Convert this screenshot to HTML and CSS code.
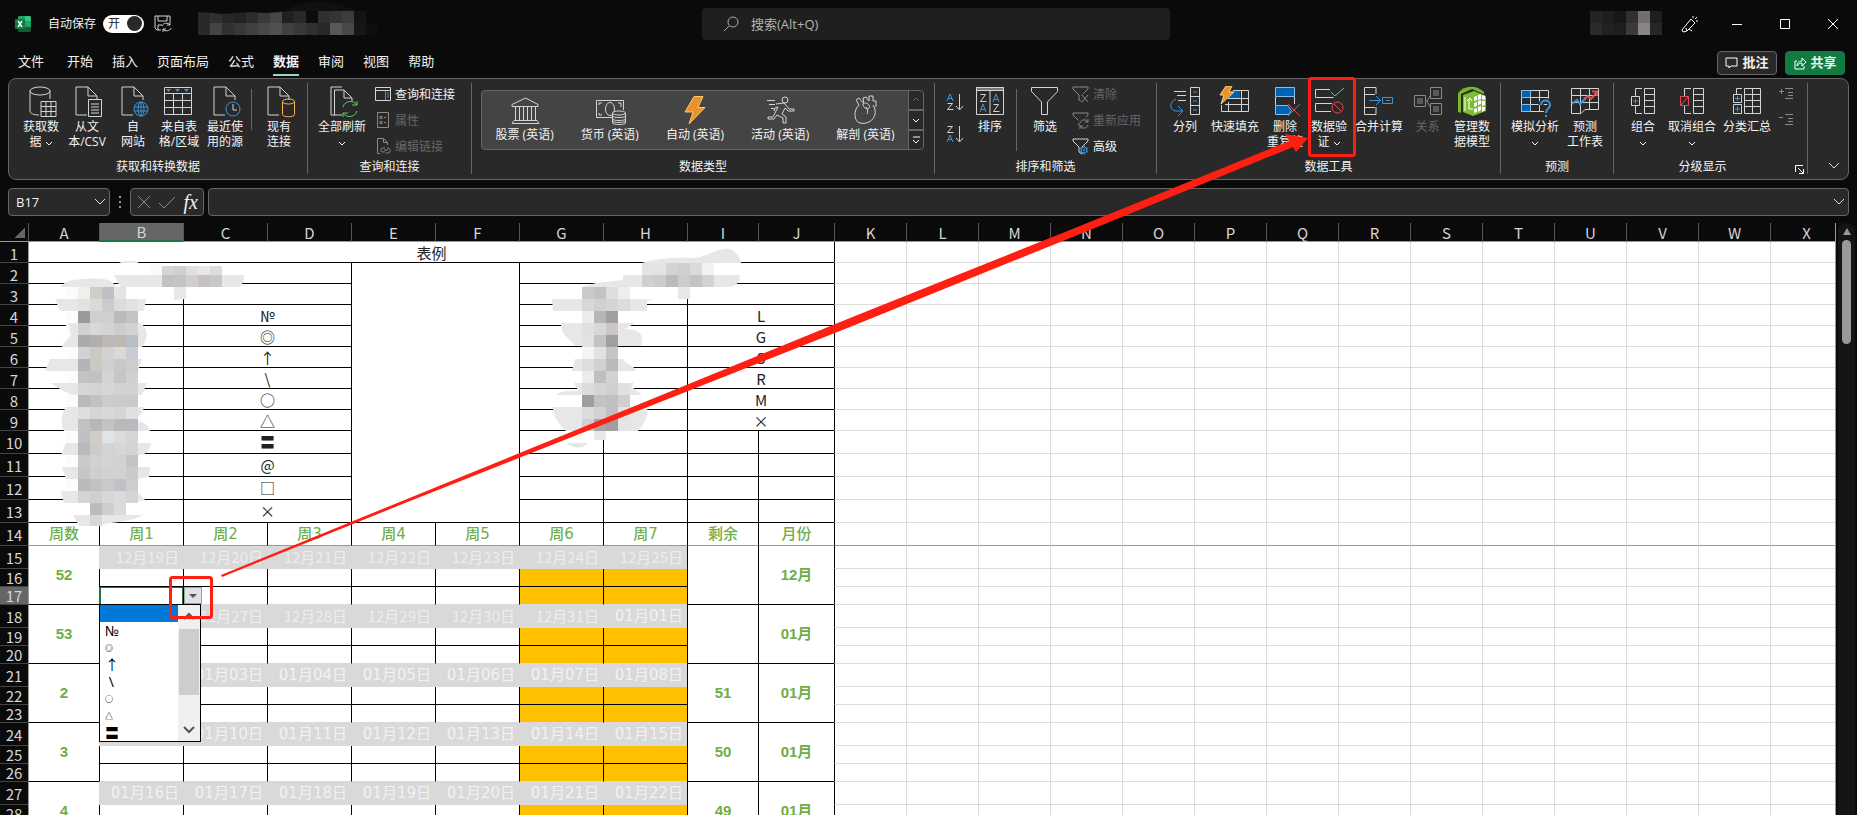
FILE: index.html
```html
<!DOCTYPE html>
<html lang="zh-CN">
<head>
<meta charset="utf-8">
<title>Excel</title>
<link rel="stylesheet" href="styles.css">
</head>
<body>
<svg class="defs" width="0" height="0" aria-hidden="true">
  <symbol id="doc" viewBox="0 0 32 32"><path d="M16 29H5V1h12l9 9v4M17 1v9h9"/></symbol>
  <symbol id="down" viewBox="0 0 8 8"><path d="M1 3l3 3 3-3"/></symbol>
  <symbol id="wide-down" viewBox="0 0 12 8"><path d="M1 1l5 5 5-5"/></symbol>
  <symbol id="funnel" viewBox="0 0 18 18"><path d="M1 2h15v2l-6 6v7l-3-2v-5L1 4z"/></symbol>
</svg>

<header class="titlebar">
  <div class="title-left">
    <svg class="i16" viewBox="0 0 16 16"><path fill="#21a366" d="M4 0h6v5H3V1z"/><path fill="#33c481" d="M10 0h5l1 1v4h-6z"/><path fill="#107c41" d="M3 5h7v6H3z"/><path fill="#21a366" d="M10 5h6v6h-6z"/><path fill="#185c37" d="M3 11h13v4l-1 1H4l-1-1z"/><rect fill="#107c41" y="3" width="10" height="10" rx="1"/><path stroke="#fff" stroke-width="1.500" d="M3 5l4 6M7 5l-4 6"/></svg>
    <span class="autosave">自动保存</span>
    <button class="toggle" aria-label="自动保存"><span>开</span><i></i></button>
    <button class="plain" aria-label="保存"><svg class="i18" viewBox="0 0 18 18"><path d="M7 15H3l-2-2V1h15v6M4 1v5h9V1M4 15v-5h4"/><path d="M8 11c1-3 6-4 8-1V7m0 3h-3M17 13c-1 3-6 4-8 1v3m0-3h3"/></svg></button>
  </div>
  <label class="search"><svg class="i16" viewBox="0 0 16 16"><circle cx="10" cy="6" r="5"/><path d="M6 10l-5 5"/></svg><input type="text" placeholder="搜索(Alt+Q)" aria-label="搜索"></label>
  <div class="title-right">
    <button class="plain pen" aria-label="画笔"><svg class="i18" viewBox="0 0 18 18"><path d="M10 4l4 4-8 8-4 1-1-2zM6 16l-1-3M8 14l3 2M12 3V1m2 3l2-2m-1 4h2"/></svg></button>
    <button class="win" aria-label="最小化"><svg class="i12" viewBox="0 0 12 12"><path d="M1 6.500h10"/></svg></button>
    <button class="win" aria-label="最大化"><svg class="i12" viewBox="0 0 12 12"><path d="M1.500 1.500h9v9h-9z"/></svg></button>
    <button class="win" aria-label="关闭"><svg class="i12" viewBox="0 0 12 12"><path d="M1 1l10 10M11 1L1 11"/></svg></button>
  </div>
</header>

<nav class="tabs">
  <button class="tab first">文件</button><button class="tab">开始</button><button class="tab">插入</button><button class="tab">页面布局</button><button class="tab">公式</button><button class="tab active">数据</button><button class="tab">审阅</button><button class="tab">视图</button><button class="tab">帮助</button>
  <div class="tab-actions">
    <button class="action"><svg class="i14" viewBox="0 0 14 14"><path d="M1 2h11v8H6l-2 2v-2H1z"/></svg>批注</button>
    <button class="action share"><svg class="i14" viewBox="0 0 14 14"><path d="M4 5H2v8h9v-3M4 10c0-4 3-5 5-5V2l4 4-4 4V7C7 7 5 8 4 10z"/></svg>共享</button>
  </div>
</nav>

<section class="ribbon">
  <div class="group g-get">
    <div class="tools">
      <button class="big w46"><svg viewBox="0 0 32 32"><ellipse cx="15" cy="5" rx="10" ry="4"/><path d="M5 5v20c0 2 3 4 9 4M25 5v8M16 15.500h15v15H16zM16 20.500h15M16 25.500h15M21 15.500v15M26 15.500v15"/></svg><span>获取数<br>据 <svg class="chev"><use href="#down"/></svg></span></button>
      <button class="big w46"><svg viewBox="0 0 32 32"><use href="#doc"/><path class="cut" d="M17.500 13.500h13v17h-13z"/><path d="M20 18h8M20 21h8M20 24h8M20 27h8"/></svg><span>从文<br>本/CSV</span></button>
      <button class="big w46"><svg viewBox="0 0 32 32"><use href="#doc"/><g class="blue"><circle class="cut" cx="24" cy="23" r="7"/><ellipse cx="24" cy="23" rx="3" ry="7"/><path d="M24 16v14M17 21h14M17 25h14"/></g></svg><span>自<br>网站</span></button>
      <button class="big w46"><svg viewBox="0 0 32 32"><path d="M1.500 1.500h27v27h-27zM1 7.500h28M1 14.500h28M1 21.500h28M10.500 7v21M19.500 7v21"/><path class="bluef" d="M3 3h5L5.500 6zM12 3h5l-2.500 3zM21 3h5l-2.500 3z"/></svg><span>来自表<br>格/区域</span></button>
      <button class="big w46"><svg viewBox="0 0 32 32"><use href="#doc"/><circle class="cut blue" cx="24" cy="23" r="7"/><path d="M24 18v6h4"/></svg><span>最近使<br>用的源</span></button>
      <i class="sep"></i>
      <button class="big w46"><svg viewBox="0 0 32 32"><use href="#doc"/><g class="gold"><path class="cut" d="M19.500 15.500v13c0 3 12 3 12 0v-13"/><ellipse cx="25.500" cy="15.500" rx="6" ry="2.500"/></g></svg><span>现有<br>连接</span></button>
    </div>
    <div class="caption">获取和转换数据</div>
  </div>
  <div class="group g-query">
    <div class="tools">
      <button class="big w52"><svg viewBox="0 0 32 32"><path d="M9 29H5V1h11M16 29H8.500V4H18l8 8v3M18 4v8h8"/><g class="green"><path d="M17 21c2-7 11-7 14-2v-4m0 4h-5M31 25c-2 7-11 7-14 2v4m0-4h5"/></g></svg><span>全部刷新<br><svg class="chev"><use href="#down"/></svg></span></button>
      <div class="stack">
        <button class="small"><svg class="i18" viewBox="0 0 18 18"><path d="M1.500 2.500h15v13h-15zM1 5.500h15"/><path class="blue" d="M11.500 6v9M13 8h2M13 10h2M13 12h2"/></svg>查询和连接</button>
        <button class="small off" disabled><svg class="i18" viewBox="0 0 18 18"><path d="M3.500 1.500h11v15h-11zM6 5.500h2v2H6zM6 10.500h2v2H6zM10 6.500h2M10 11.500h2"/></svg>属性</button>
        <button class="small off" disabled><svg class="i18" viewBox="0 0 18 18"><path d="M6 16.500H3.500v-15h6l4 4V8M9.500 1.500v4h4"/><path d="M11 11h-2c-3 0-3 4 0 4h2M13 11h1c3 0 3 5 0 5h-2M10 13h4"/></svg>编辑链接</button>
      </div>
    </div>
    <div class="caption">查询和连接</div>
  </div>
  <div class="group g-types">
    <div class="gallery">
      <button><svg viewBox="0 0 32 32"><path d="M3 9.500L16.500 3 29 9.500v2H3zM6.500 12v13M10.500 12v13M14.500 12v13M18.500 12v13M22.500 12v13M26.500 12v13M5 25.500h23l2 3H3z"/></svg>股票 (英语)</button>
      <button><svg viewBox="0 0 32 32"><path d="M18 22.500H2.500v-17h27V15M5 10V8h3M24 8h3v4M5 18v2h3"/><ellipse cx="16" cy="14" rx="4.500" ry="6.500"/><path class="cut4" d="M18.500 18v10c0 2 13 2 13 0V18"/><ellipse class="cut4" cx="25" cy="18" rx="6.500" ry="2"/><path d="M18.500 21c0 2 13 2 13 0M18.500 24c0 2 13 2 13 0M18.500 26c0 2 13 2 13 0"/></svg>货币 (英语)</button>
      <button><svg viewBox="0 0 32 32"><path fill="#e8912d" stroke="#ffc866" d="M15 1.500h9l-5 11h7L10 29l4-12H6z"/></svg>自动 (英语)</button>
      <button><svg viewBox="0 0 32 32"><circle cx="21" cy="5" r="3"/><path d="M3 5.500h8M5 9.500h6M7 13.500h3M12 9l8-1 5 6h5v2h-6l-3-3-3 6 4 3v6h-3v-5l-6-3-3 4H4v-2h5l5-10-3 1-1 3"/></svg>活动 (英语)</button>
      <button><svg viewBox="0 0 32 32"><path d="M10 10c-6 5-5 17 1 18 8 2 17-4 15-14l-2-4M10 10L7 5l3-2 5 6-1-6 3-1 3 4V1h4v5h3v6M14 9c0 4 4 5 5 5M19 14c3-2 1-6-3-6M17 12c2 3 2 5 1 7"/></svg>解剖 (英语)</button>
      <div class="spin">
        <button class="dim" aria-label="上"><svg class="chev flip"><use href="#down"/></svg></button>
        <button aria-label="下"><svg class="chev"><use href="#down"/></svg></button>
        <button aria-label="更多"><svg class="chev" viewBox="0 0 8 8"><path d="M1 1h7M1 4l3 3 3-3"/></svg></button>
      </div>
    </div>
    <div class="caption">数据类型</div>
  </div>
  <div class="group g-sort">
    <div class="tools">
      <div class="sorts">
        <button class="plain" aria-label="升序"><svg viewBox="0 0 20 20"><path class="blue" d="M1 9l3-7 3 7M2 6.500h4"/><path d="M1.500 11.500h5l-5 6h6M13.500 2v15M10 14l3.500 4 3.500-4"/></svg></button>
        <button class="plain" aria-label="降序"><svg viewBox="0 0 20 20"><path class="blue" d="M1 18l3-7 3 7M2 15.500h4"/><path d="M1.500 2.500h5l-5 6h6M13.500 2v15M10 14l3.500 4 3.500-4"/></svg></button>
      </div>
      <button class="big w46"><svg viewBox="0 0 32 32"><path fill="#777" d="M2.500 1.500h27v3h-27z"/><path d="M2.500 1.500h27v27h-27zM16 5v23M6.500 8.500h5l-5 7h6M19.500 18.500h5l-5 7h6"/><path class="blue" d="M6 26l3-8 3 8M7 23.500h4M19 16l3-8 3 8M20 13.500h4"/></svg><span>排序</span></button>
      <i class="sep tall"></i>
      <button class="big w46"><svg viewBox="0 0 32 32"><path d="M2.500 1.500h26v4L18.500 16v12.500h-6V16L2.500 5.500z"/></svg><span>筛选</span></button>
      <div class="stack">
        <button class="small off" disabled><svg class="i18" viewBox="0 0 18 18"><use href="#funnel"/><path class="halo" d="M10 10l6 7M16 10l-6 7"/><path d="M10 10l6 7M16 10l-6 7"/></svg>清除</button>
        <button class="small off" disabled><svg class="i18" viewBox="0 0 18 18"><use href="#funnel"/><path class="halo" d="M8 12c1-4 7-4 8-1V8m0 3h-3M16 14c-1 4-7 4-8 1v3m0-3h3"/><path d="M8 12c1-4 7-4 8-1V8m0 3h-3M16 14c-1 4-7 4-8 1v3m0-3h3"/></svg>重新应用</button>
        <button class="small"><svg class="i18" viewBox="0 0 18 18"><use href="#funnel"/><g class="blue"><circle class="cut" cx="12" cy="13" r="3"/><circle cx="12" cy="13" r="1"/><path d="M12 8v2M12 16v2M8 11l2 1M14 14l2 1M8 15l2-1M14 12l2-1"/></g></svg>高级</button>
      </div>
    </div>
    <div class="caption">排序和筛选</div>
  </div>
  <div class="group g-data">
    <div class="tools">
      <button class="big w40"><svg viewBox="0 0 32 32"><path d="M5 5.500h12M8 9.500h9M9 14.500h8M21.500 1.500h9v27h-9zM21 10.500h9M21 19.500h9"/><path class="blue" d="M24 6h4M24 15h4M24 24h4M7 13c-7 3-7 11 0 12h7M9 20l5 5-5 5"/></svg><span>分列</span></button>
      <button class="big w60"><svg viewBox="0 0 32 32"><path fill="#0063b1" stroke="none" d="M11 5h10v7H8z"/><path d="M14 4.500h15.500v21h-27V19M9 12.500h20M6 18.500h23M22.500 5v20M9.500 16v10"/><path fill="#e8912d" stroke="#ffd27a" d="M7 0h6l-3 6h5L2 18l3-9H1z"/></svg><span>快速填充</span></button>
      <button class="big w40"><svg viewBox="0 0 32 32"><path class="solid" d="M6.500 1.500h19v9h-19zM6.500 19.500h12l4 5-3 4h-13z"/><path d="M6.500 11v8M25.500 11v7"/><path class="red" d="M19 18l12 12M31 18L19 30"/></svg><span>删除<br>重复值</span></button>
      <button class="big w48"><svg viewBox="0 0 32 32"><path d="M17 3.500H2.500v8h18M19 17.500H2.500v8H18"/><path class="green" d="M18 6l4 4 9-8"/><g class="red"><circle cx="24.500" cy="21.500" r="5.500"/><path d="M21 18l7 7"/></g></svg><span>数据验<br>证 <svg class="chev"><use href="#down"/></svg></span></button>
      <button class="big w52"><svg viewBox="0 0 32 32"><path d="M13 8V1.500H1.500v27H13V21M1 8.500h11M1 21.500h11"/><path class="blue" d="M6 14.500h11M13 10l4.500 4.500L13 19M19.500 11.500h10v6h-10zM23 14.500h4"/></svg><span>合并计算</span></button>
      <button class="big w45 off" disabled><svg viewBox="0 0 32 32"><path d="M2.500 9.500h11v11h-11zM18.500 1.500h11v11h-11zM18.500 17.500h11v11h-11zM13 15h2l3-5M15 15l3 6M5 13h6M5 15h6M5 17h6M21 5h6M21 7h6M21 9h6M21 21h6M21 23h6M21 25h6"/></svg><span>关系</span></button>
      <button class="big w44"><svg viewBox="0 0 32 32"><path fill="#76b82a" stroke="none" d="M2 7c7-8 18-8 26-1v20l-12 4L2 26z"/><path fill="#292929" stroke="none" d="M5 8l11-5 14 6v17l-13 6L5 28z"/><path fill="#7cbf2e" stroke="none" d="M7 9l11-4 12 5v15l-13 5L7 26z"/><path stroke="#fff" d="M9 11v14M13 13v10M11 15l3-3 2 3M13 23h4"/><path fill="#fff" stroke="none" d="M18 11l3-1v4l-3 1zM22 9l3-1v5l-3 1zM26 9l3 1v4l-3-1zM18 17l3-1v4l-3 1zM22 15l3-1v4l-3 1zM26 15h3v4l-3 1zM18 23l3-1v4l-3 1zM22 21l3-1v4l-3 2zM26 21h3v3l-3 2z"/></svg><span>管理数<br>据模型</span></button>
    </div>
    <div class="caption">数据工具</div>
  </div>
  <div class="group g-fore">
    <div class="tools">
      <button class="big w52"><svg viewBox="0 0 32 32"><path d="M2.500 4.500h27v21h-27zM2 11.500h27M2 18.500h27M11.500 5v20M20.500 5v20"/><path class="solid" d="M2.500 4.500h9v7h-9zM2.500 18.500h9v7h-9z"/><path class="halo" d="M22 19c0-6 9-6 9 0 0 4-4 3-4 8M27 29v2"/><path class="blue thick" d="M22 19c0-6 9-6 9 0 0 4-4 3-4 8M27 29v2"/></svg><span>模拟分析<br><svg class="chev"><use href="#down"/></svg></span></button>
      <button class="big w48"><svg viewBox="0 0 32 32"><path d="M2.500 2.500h27v21H16l-4 4H2.500zM2 9.500h27M2 16.500h27M11.500 3v24M20.500 3v20"/><path class="blue thick" d="M3 18l5-4 3 4 6-6"/><path class="red thick" d="M15 13l4-3 3 3 6-7M23 5.500h5V10"/></svg><span>预测<br>工作表</span></button>
    </div>
    <div class="caption">预测</div>
  </div>
  <div class="group g-outline">
    <div class="tools">
      <button class="big w40"><svg viewBox="0 0 32 32"><path d="M15 2.500H8.500v25H15M17.500 2.500h10v25h-10zM17 8.500h10M17 14.500h10M17 20.500h10"/><path class="cut" d="M4.500 10.500h8v9h-8z"/><path class="blue" d="M6 15h5M8.500 12.500v5"/></svg><span>组合<br><svg class="chev"><use href="#down"/></svg></span></button>
      <button class="big w58"><svg viewBox="0 0 32 32"><path d="M15 2.500H8.500v25H15M17.500 2.500h10v25h-10zM17 8.500h10M17 14.500h10M17 20.500h10"/><path class="cut red" d="M4.500 10.500h8v9h-8zM5 19l7-8"/></svg><span>取消组合<br><svg class="chev"><use href="#down"/></svg></span></button>
      <button class="big w52"><svg viewBox="0 0 32 32"><path d="M11 2.500H5.500V8M13.500 2.500h16v25h-16zM13 8.500h16M13 14.500h16M13 20.500h16M21.500 3v24M2.500 8.500h8v8h-8zM2.500 18.500h8v9h-8z"/><path class="blue" d="M4 12.500h5M6.500 10v5M4 23h5M6.500 20.500v5"/></svg><span>分类汇总</span></button>
      <div class="stack">
        <button class="small off" aria-label="显示明细"><svg class="i18" viewBox="0 0 18 18"><path d="M2 6.500h5M4.500 4v5M8 3.500h8M11 7.500h5M11 10.500h5M8 13.500h8"/></svg></button>
        <button class="small off" aria-label="隐藏明细"><svg class="i18" viewBox="0 0 18 18"><path d="M2 6.500h4M8 3.500h8M11 7.500h5M11 10.500h5M8 13.500h8"/></svg></button>
      </div>
    </div>
    <div class="caption launch">分级显示<button class="plain" aria-label="设置"><svg viewBox="0 0 9 9"><path d="M.5 7V.5H8M3 3l5 5M8.500 4v4.500H4"/></svg></button></div>
  </div>
  <button class="plain collapse" aria-label="折叠"><svg class="wd"><use href="#wide-down"/></svg></button>
</section>

<section class="formula">
  <label class="field namebox"><input type="text" value="B17" aria-label="名称框"><svg class="wd"><use href="#wide-down"/></svg></label>
  <span class="dots"><i></i><i></i><i></i></span>
  <div class="field fx">
    <button class="plain off" aria-label="取消"><svg class="i14" viewBox="0 0 14 14"><path d="M1 1l12 12M13 1L1 13"/></svg></button>
    <button class="plain off" aria-label="输入"><svg class="i18" viewBox="0 0 18 14"><path d="M1 8l5 5L17 2"/></svg></button>
    <button class="plain fn">fx</button>
  </div>
  <label class="field input"><input type="text" aria-label="编辑栏"><svg class="wd"><use href="#wide-down"/></svg></label>
</section>

<main class="workspace">
  <div class="sheet"><table class="grid" id="grid"></table></div>
  <div class="scroll"><i class="up"></i><i class="thumb"></i></div>
</main>

<svg class="overlay" id="overlay" width="1857" height="815" viewBox="0 0 1857 815" aria-hidden="true"></svg>
<script src="sheet.js"></script>
</body>
</html>
```

FILE: styles.css
```css
* { box-sizing: border-box; }
body { margin: 0; height: 100vh; overflow: hidden; display: flex; flex-direction: column; position: relative; background: #0a0a0a; color: #f2f2f2; font: 12px/15px "Open Sans", "Noto Sans CJK SC", sans-serif; }
button, input { font: inherit; color: inherit; background: none; border: 0; padding: 0; margin: 0; outline: 0; }
svg { fill: none; stroke: #d4d4d4; stroke-width: 1; display: block; flex: none; }
.defs { position: absolute; }
.i12 { width: 12px; height: 12px; stroke: #fff; }
.i14 { width: 14px; height: 14px; }
.i16 { width: 16px; height: 16px; }
.i18 { width: 18px; height: 18px; }
.plain { display: flex; align-items: center; justify-content: center; }
.blue { stroke: #3a96dd; }
.bluef { fill: #3a96dd; stroke: none; }
svg .halo { stroke: #292929; stroke-width: 5; }
.solid { fill: #0063b1; stroke: #83beec; }
.green { stroke: #5fc878; }
.red { stroke: #e74856; }
.gold { stroke: #ffb254; }
.thick { stroke-width: 2; }
.cut { fill: #292929; }
.cut4 { fill: #444; }
.off { color: #666; }
.off svg { stroke: #8a8a8a; }

.titlebar { height: 47px; flex: none; display: grid; grid-template-columns: 1fr 468px 1fr; align-items: center; padding-left: 15px; }
.title-left { display: flex; align-items: center; }
.title-left > svg { stroke: none; }
.autosave { margin: 0 7px 0 17px; }
.toggle { width: 41px; height: 18px; border-radius: 9px; background: #fff; color: #222; display: flex; align-items: center; justify-content: space-between; padding: 0 2px 0 5px; margin-right: 10px; }
.toggle i { width: 15px; height: 15px; border-radius: 50%; background: #292929; }
.search { height: 32px; border-radius: 4px; background: #1f1f1f; display: flex; align-items: center; gap: 12px; padding-left: 21px; color: #b4b4b4; font-size: 13px; }
.search svg { stroke: #aaa; }
.search input { flex: 1; height: 24px; }
.search input::placeholder { color: #b4b4b4; opacity: 1; }
.title-right { display: flex; justify-content: flex-end; align-items: center; }
.title-right svg { stroke: #fff; }
.pen { margin-right: 14px; }
.win { width: 48px; height: 32px; display: flex; align-items: center; justify-content: center; }

.tabs { height: 31px; flex: none; display: flex; align-items: center; gap: 19px; padding: 0 12px 0 18px; font-size: 13px; }
.tab { height: 26px; border-bottom: 2px solid transparent; }
.tab.first { margin-right: 4px; }
.tab.active { font-weight: 700; border-color: #9fd5b7; }
.tab-actions { margin-left: auto; display: flex; gap: 8px; }
.action { width: 60px; height: 24px; border: 1px solid #666; border-radius: 4px; background: #292929; font-weight: 700; display: flex; align-items: center; justify-content: center; gap: 3px; }
.action svg { stroke: #fff; }
.share { background: #107c41; border-color: #107c41; }

.ribbon { height: 102px; flex: none; margin: 0 8px; border: 1px solid #666; border-radius: 8px; background: #292929; display: flex; }
.group { flex: none; display: flex; flex-direction: column; justify-content: space-between; margin: 4px 0 5px; border-right: 1px solid #666; }
.g-get { width: 299px; }
.g-query { width: 164px; }
.g-types { width: 463px; }
.g-sort { width: 222px; }
.g-data { width: 344px; }
.g-fore { width: 113px; }
.g-outline { width: 194px; }
.tools { display: flex; align-items: flex-start; height: 76px; padding-left: 8px; }
.g-get .tools, .g-sort .tools, .g-outline .tools { padding-left: 9px; }
.caption { text-align: center; line-height: 15px; position: relative; }
.launch { padding-right: 16px; }
.launch .plain { position: absolute; right: 3px; bottom: 0; }
.launch .plain svg { width: 9px; height: 9px; stroke: #fff; }
.big { flex: none; display: flex; flex-direction: column; align-items: center; text-align: center; white-space: nowrap; padding-top: 3px; }
.big > svg { width: 32px; height: 32px; }
.big > span { display: flow-root; margin: 1px -8px 0; }
.chev, .big .chev { width: 8px; height: 8px; stroke: #fff; display: inline-block; vertical-align: middle; }
.flip { transform: rotate(180deg); }
.w40 { width: 40px; } .w44 { width: 44px; } .w45 { width: 45px; } .w46 { width: 46px; }
.w48 { width: 48px; } .w52 { width: 52px; } .w58 { width: 58px; } .w60 { width: 60px; }
.sep { flex: none; width: 1px; height: 41px; background: #666; margin: 6px 4px 0 3px; }
.sep.tall { height: 62px; margin-right: 5px; }
.stack { display: flex; flex-direction: column; margin: -2px 0 0 4px; }
.g-query .stack { margin-left: 6px; }
.small { height: 26px; display: flex; align-items: center; gap: 3px; white-space: nowrap; }
.sorts { width: 22px; display: flex; flex-direction: column; gap: 12px; padding: 9px 0 0 1px; margin-right: 1px; }
.sorts svg { width: 20px; height: 20px; }
.gallery { height: 60px; margin: 7px 10px 0 9px; border: 1px solid #666; border-radius: 4px; background: #444; display: flex; overflow: hidden; }
.gallery > button { flex: 1; display: flex; flex-direction: column; align-items: center; white-space: nowrap; padding-top: 4px; }
.gallery > button svg { width: 32px; height: 32px; }
.spin { width: 15px; display: flex; flex-direction: column; gap: 2px; border-left: 1px solid #666; background: #666; }
.spin button { flex: 1; background: #292929; display: flex; align-items: center; justify-content: center; }
.dim .chev { stroke: #666; }
.wd { width: 12px; height: 8px; stroke: #ddd; }
.collapse { align-self: flex-end; margin: 0 8px 9px auto; }

.formula { height: 28px; flex: none; margin: 8px 8px 7px; display: flex; }
.field { border: 1px solid #666; border-radius: 4px; background: #292929; display: flex; align-items: center; }
.namebox { width: 102px; padding: 0 4px 0 7px; font-size: 13px; }
.namebox input { width: 78px; height: 24px; }
.dots { width: 20px; display: flex; flex-direction: column; align-items: center; justify-content: center; gap: 3px; }
.dots i { width: 2px; height: 2px; background: #999; }
.fx { width: 74px; margin-right: 4px; justify-content: space-between; padding: 0 5px 0 6px; }
.fn { font: italic 20px/24px "Liberation Serif", serif; }
.input { flex: 1; padding: 0 3px; }
.input input { flex: 1; }

.workspace { flex: 1; min-height: 0; display: flex; }
.sheet { flex: 1; min-width: 0; overflow: hidden; border-right: 1px solid #999; }
.scroll { flex: none; width: 17px; margin: 0 2px; border-radius: 8px 8px 0 0; background: #151515; display: flex; flex-direction: column; align-items: center; gap: 5px; padding-top: 5px; }
.up { border: 4px solid transparent; border-top: 0; border-bottom: 7px solid #999; }
.thumb { width: 9px; height: 104px; border-radius: 5px; background: #999; }
.grid { width: calc(100% + 7px); table-layout: fixed; border-collapse: separate; border-spacing: 0; font: 15px/17px "Noto Sans CJK SC", sans-serif; color: #222; }
.c-num { width: 28px; } .c-a, .c-i { width: 71px; } .c-day { width: 84px; } .c-j { width: 76px; } .c-x { width: 72px; }
.grid th { background: #0a0a0a; color: #d6d6d6; font-weight: 400; padding: 0; border-bottom: 1px solid #444; vertical-align: bottom; }
.grid thead th { height: 19px; border-left: 1px solid #555; border-bottom-color: #999; }
.grid thead th:first-child { border-left: 0; }
.grid .corner i { display: block; margin: 0 3px 3px auto; width: 11px; height: 11px; background: linear-gradient(135deg, transparent 50%, #666 50%); }
.grid th.sel { background: #666; }
.grid thead th.sel { border-bottom: 2px solid #217346; line-height: 16px; }
.grid td { background: #fff; padding: 0; text-align: center; vertical-align: middle; border-left: 1px solid #000; border-bottom: 1px solid #000; white-space: nowrap; }
.grid td.first { border-left-color: #999; }
.grid td.blank { border-color: #dcdcdc; }
.grid td.edge { border-left-color: #000; }
.grid .freeze td { border-bottom-color: #999; }
.h21 { height: 21px; } .h23 { height: 23px; } .h18 { height: 18px; }
.grid .h23 th, .grid .h23 td { padding-bottom: 2px; }
.grid .h18 th { line-height: 15px; padding-bottom: 1px; }
.grid .freeze td:not(.blank) { color: #70ad47; font-family: "DejaVu Sans", "Noto Sans CJK SC", sans-serif; font-weight: 500; padding-bottom: 0; }
.grid td.num { color: #70ad47; font-family: "Liberation Sans", "Noto Sans CJK SC", sans-serif; font-weight: 700; }
.grid td.date { background: #d9d9d9; border-color: #d9d9d9; color: #ededed; text-align: right; padding-right: 4px; }
.grid td.jan { color: #f2f2f2; font-family: "DejaVu Sans", "Noto Sans CJK SC", sans-serif; padding-bottom: 0; }
.grid td.weekend { background: #ffc000; }
.grid td.last { border-bottom-color: #d9d9d9; }
.grid td.pick { position: relative; box-shadow: inset 0 1px #217346, inset -1px 0 #217346; border-left: 2px solid #217346; }
.picker { position: absolute; left: 83px; top: 0; width: 18px; height: 17px; background: #dfe3e8; border: 1px solid #a0a0a0; display: flex; align-items: center; justify-content: center; z-index: 2; }
.picker i { border: 4px solid transparent; border-bottom: 0; border-top-color: #555; }
.options { position: absolute; z-index: 2; left: -2px; top: 17px; width: 102px; height: 138px; border: 1px solid #000; background: #fff; display: flex; font: 14px/17px "Noto Sans", "Noto Sans CJK SC", sans-serif; color: #000; }
.options ul { flex: 1; list-style: none; margin: 0; padding: 0; text-align: left; }
.options li { height: 17px; padding-left: 5px; }
.options li.on { background: #0078d7; }
.options .tiny { font-size: 8px; font-weight: 700; }
.bar { width: 22px; background: #f0f0f0; display: flex; flex-direction: column; align-items: center; justify-content: space-between; padding: 7px 0; }
.bar svg { stroke: #555; stroke-width: 2; }
.bar i { width: 20px; height: 66px; background: #cdcdcd; margin: 7px 0 29px; }
.overlay { position: absolute; left: 0; top: 0; pointer-events: none; z-index: 3; stroke: none; }
```

FILE: sheet.js
```js
const cols = 'ABCDEFGHIJKLMNOPQRSTUVWX'.split('');
const grid = document.getElementById('grid');
const colClass = i => i === 0 ? 'c-a' : i < 8 ? 'c-day' : i === 8 ? 'c-i' : i === 9 ? 'c-j' : i < 23 ? 'c-x' : '';
const td = (text = '', cls = '', cs = 1, rs = 1) =>
  `<td class="${cls}" colspan="${cs}" rowspan="${rs}">${text}</td>`;
const blanks = '<td class="blank edge"></td>' + '<td class="blank"></td>'.repeat(13);

let html = '<colgroup><col class="c-num">' + cols.map((c, i) => `<col class="${colClass(i)}">`).join('') + '</colgroup>';
html += '<thead><tr><th class="corner"><i></i></th>' +
  cols.map(c => `<th class="${c === 'B' ? 'sel' : ''}">${c}</th>`).join('') + '</tr></thead><tbody>';

const row = (n, h, cells, cls = '') => {
  html += `<tr class="${h} ${cls}"><th class="${n === 17 ? 'sel' : ''}">${n}</th>${cells}${blanks}</tr>`;
};

row(1, 'h21', td('表例', 'first', 10));
row(2, 'h21', td('', 'first', 4) + td('', '', 2, 12) + td('', '', 4));
row(3, 'h21', td('', 'first', 2) + td('', '', 2) + td('', '', 2) + td('', '', 2));
const marks = ['№', '◎', '↑', '\\', '○', '△', '〓', '@', '□', '×'];
const codes = ['L', 'G', 'S', 'R', 'M', '×'];
marks.forEach((m, i) => {
  const right = i < 6 ? td('', '', 2) + td(codes[i], '', 2) : td() + td() + td() + td();
  row(4 + i, i < 6 ? 'h21' : 'h23', td('', 'first', 2) + td(m, '', 2) + right);
});
row(14, 'h23', td('周数', 'first') + [1, 2, 3, 4, 5, 6, 7].map(d => td('周' + d)).join('') + td('剩余') + td('月份'), 'freeze');

const picker = `<button class="picker" aria-label="选择"><i></i></button>
<div class="options"><ul role="listbox"><li class="on" role="option"></li><li role="option">№</li><li class="tiny" role="option">◎</li><li role="option">↑</li><li role="option">&nbsp;\\</li><li class="tiny" role="option">○</li><li class="tiny" role="option">△</li><li role="option">〓</li></ul>
<div class="bar"><svg width="12" height="8" viewBox="0 0 12 8"><path d="M1 7l5-5 5 5"/></svg><i></i><svg width="12" height="8" viewBox="0 0 12 8"><path d="M1 1l5 5 5-5"/></svg></div></div>`;
const weeks = [['52', '', '12月'], ['53', '', '01月'], ['2', '51', '01月'], ['3', '50', '01月'], ['4', '49', '01月']];
const start = Date.UTC(2022, 11, 19);
weeks.forEach(([week, left, month], w) => {
  const days = [0, 1, 2, 3, 4, 5, 6];
  const dates = days.map(d => {
    const t = new Date(start + (w * 7 + d) * 864e5);
    const mm = String(t.getUTCMonth() + 1).padStart(2, '0');
    return td(`${mm}月${String(t.getUTCDate()).padStart(2, '0')}日`, mm === '01' ? 'date jan' : 'date');
  }).join('');
  const n = 15 + w * 3;
  row(n, 'h23', td(week, 'first num', 1, 3) + dates + td(left, 'num', 1, 3) + td(month, 'num', 1, 3));
  row(n + 1, 'h18', days.map(d => td('', d > 4 ? 'weekend' : '')).join(''));
  row(n + 2, 'h18', days.map(d => n === 15 && d === 0 ? td(picker, 'pick') : td('', d > 4 ? 'weekend last' : 'last')).join(''));
});
grid.innerHTML = html + '</tbody>';

// Redaction brush strokes, 12px mosaic tiles and the red annotations.
const tiles = (x, y, rows, h = 12) => rows.map((r, j) => r.split(' ').map((c, i) =>
  c === '-' ? '' : `<rect x="${x + i * 12}" y="${y + j * h}" width="12" height="${h}" fill="#${c}"/>`).join('')).join('');
const shape = (d, fill = '#e7e7e7') => `<path d="${d}" fill="${fill}"/>`;
let art = '';
art += tiles(198, 11, ['282828 303030 272727 222222 2c2c2c 3a3a3a 464646 202020 292929 0c0c0c 303030 343434 3c3c3c 141414',
  '292929 444444 303030 383838 404040 484848 505050 404040 383838 303030 282828 585858 484848 161616 0e0e0e']);
art += shape('M198 10h100l-18 2-14 1-16-1-28 2-10-1-14-1z', '#0a0a0a');
art += shape('M290 8c16-8 40-8 56-1l12 4h-70z', '#101010');
art += tiles(1590, 11, ['242424 1e1e1e 171717 303030 746f6e 1e1e1e', '2a2a2a 212121 1e1e1e 3b393a 8a8482 272526']);
art += '<rect x="66" y="287" width="12" height="216" fill="#fcfcfc"/>';
art += shape('M138 287h36v11l-36 5z', '#ffffff') + shape('M150 264h12v11h-12z', '#fafafa');
art += shape('M119 263c6-3 15-3 20 0zM61 286c8-8 16-6 24-7 10-1 24-1 28 4 2 2 3 3 3 4H61zM114 275h130c0 6-2 9-4 12H120zM174 287h12v12l-12 1z');
art += shape('M55 299h91l-2 12H60zM68 323h72c8 4 9 16 2 24H62c2-6 9-10 9-12zM50 359h92l-4 12H45zM50 383h97l-5 12H72l-10-5zM66 407h78c-1 8-10 12-8 14 8 0 14 6 14 10H64c-4-8-3-16 2-24zM66 443h85c-1 8-5 11-10 12H61zM62 467h88l-1 10-12 2H66zM61 491h76l8 9-16 3H64zM73 515l69 0c-6 6-34 8-50 11H79z');
art += tiles(162, 266, ['d3d4d4 cfcfcf e0e0e0 e8e8ec dcdcdc'], 9) + tiles(162, 275, ['c2c2c2 c6c4c2 cfcfcf c8c1c1 c4c9c8']);
art += tiles(78, 287, ['f0efec cfcdcb bfc0c4 e4e4e4', 'e2e2e2 dadada cbcbcf dcdcdc e0e3e4', '9a9a9d cfcfcd cfcfcd b9babc c2c3c6',
  'd0d0d2 d8d8d8 d4d4d4 cccccc d2d2d2', 'aaaaaa b0b0ae bbb8b5 c0b8b5 b8bec6', 'd2d2d4 ccc9c5 d2d2d2 d9dad4 c9ccd2',
  'b3b5b4 ccc9c5 d0d0d0 c8c8c8 cdcdcd', 'c2c4c3 c3c1be d3d3d3 c5c5c5 d0d0d0', 'd5d5d5 d3d3d3 d6d6d6 d2d2d2 d2d2d2',
  'b9b9ba c5c2bd cccccc c9cccd c8cbcd', 'dedede d5d5d5 d8d8d8 d5d5d5 e0e0e0', 'c2c2c2 b9b7b3 c3c3c3 bab9b9 b9babf',
  'c0c0c2 d0cdc9 e1e4e5 dcdcdc d5d5d5', 'bababa cccccc d3d3d3 d6d6d6 d4d4d4', 'c8c9cb d6d0cc d4d4d4 d2d2d2 c3c4c6',
  'c6c6c8 cfcfcf d2d2d2 d2d2d2 cacaca', 'bcb9bc c3c0be c9c9c9 c0c1c4 cdcdcd', 'd4d4d4 d0d0d0 d8d8d8 dadada d4d4d4',
  '- bfbcb8 cccfce dadada -']);
art += '<rect x="90" y="515" width="12" height="11" fill="#d8d8d8"/>';
art += shape('M642 263c12-5 36-6 52-5 14-1 22-10 34-9 8 1 12 8 13 14h-27v12h26c0 6-3 12-12 12h-38v12h-12v-12h-96l14-4 27-3v-5h19z');
art += shape('M552 299h102l-7 2v10h-94zM561 323h74l-10 6c20 0 18 12 16 17h-66c-5-8-14-10-14-23zM575 359h49c-2 4 11 6 12 12h-64zM574 383h60l-2 4 10 8h-86c6-6 20-3 22-5zM553 407h94c2 10-4 18-9 24h-72c-8-8-13-14-13-24zM566 443h22c-4 6-15 6-22 0zM594 431h12v9h-12z');
art += tiles(642, 263, ['e3e3e1 e3e3e1 d3d5d4 cfcfcf dadada f2f2f2', 'd0d0d0 cccccc babbbe cccccc c4c4c2 d0d2d6']);
art += tiles(582, 287, ['cacac8 c3c3c3 dedede e8eef2', 'd8d8d4 cfd0d2 d5d5d5 dcdcdc', 'eeecea b6b6b2 9f9fa1 ffffff', 'e0e0e0 d8d8d8 ccc6c6 -',
  'e2e2e2 c3c3c3 9f9fa2 -', 'f4f4f2 e2e2e4 c3c5c8 -', 'dededc cfd2d0 bababc -', 'ecebeb c0bebe d0d3d3 -', 'dcdcdc d5d5d5 cfcfcf e0e0e0',
  'a19e9f bfc3c1 c0c1c3 cfcfd3', 'dcdcdc d2d2d2 c0c0c2 e3e5e5', 'cfcfcf a5a5a5 9f9fa1 e5e5e5']);
art += shape('M221 575L850 318 1070 230 1289 141 1285 134 1308 138 1296 152 1293 147 1090 230 850 327 410 501 222 577z', '#ff1e12');
art += '<g fill="none" stroke="#ff1e12" stroke-width="3"><rect x="1309.5" y="78.5" width="45" height="77" rx="2"/><rect x="170.5" y="577.5" width="41" height="40" rx="2"/></g>';
document.getElementById('overlay').innerHTML = art;
```
